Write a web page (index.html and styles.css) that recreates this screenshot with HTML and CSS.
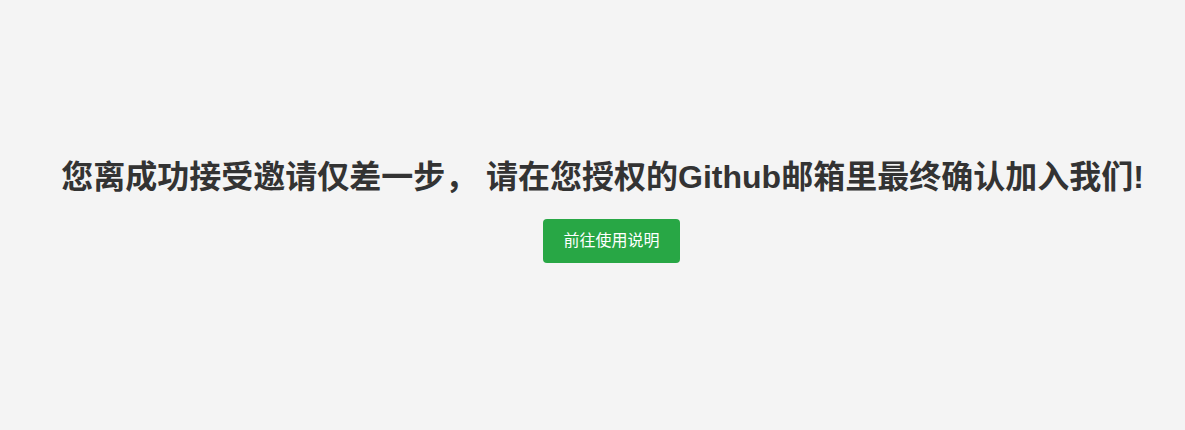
FILE: index.html
```html
<!DOCTYPE html>
<html lang="zh">
<head>
<meta charset="utf-8">
<link rel="stylesheet" href="styles.css">
</head>
<body>
<main class="page">
  <h1 class="title">您离成功接受邀请仅差一步， 请在您授权的Github邮箱里最终确认加入我们!</h1>
  <a class="btn" href="#">前往使用说明</a>
</main>
</body>
</html>
```

FILE: styles.css
```css
html, body {
  margin: 0;
  padding: 0;
  background: #f4f4f4;
}
body {
  font-family: "Liberation Sans", Arial, "Noto Sans CJK SC", sans-serif;
  color: #333;
}
.page {
  display: flex;
  flex-direction: column;
  align-items: center;
  padding-top: 155px;
  padding-left: 20px;
}
.title {
  margin: 0;
  font-size: 32px;
  font-weight: bold;
  line-height: 44px;
  color: #333;
}
.btn {
  margin-top: 20px;
  margin-left: 18px;
  display: inline-block;
  background: #28a745;
  color: #fff;
  font-size: 16px;
  line-height: 24px;
  padding: 10px 20px;
  border-radius: 4px;
  text-decoration: none;
}
```
